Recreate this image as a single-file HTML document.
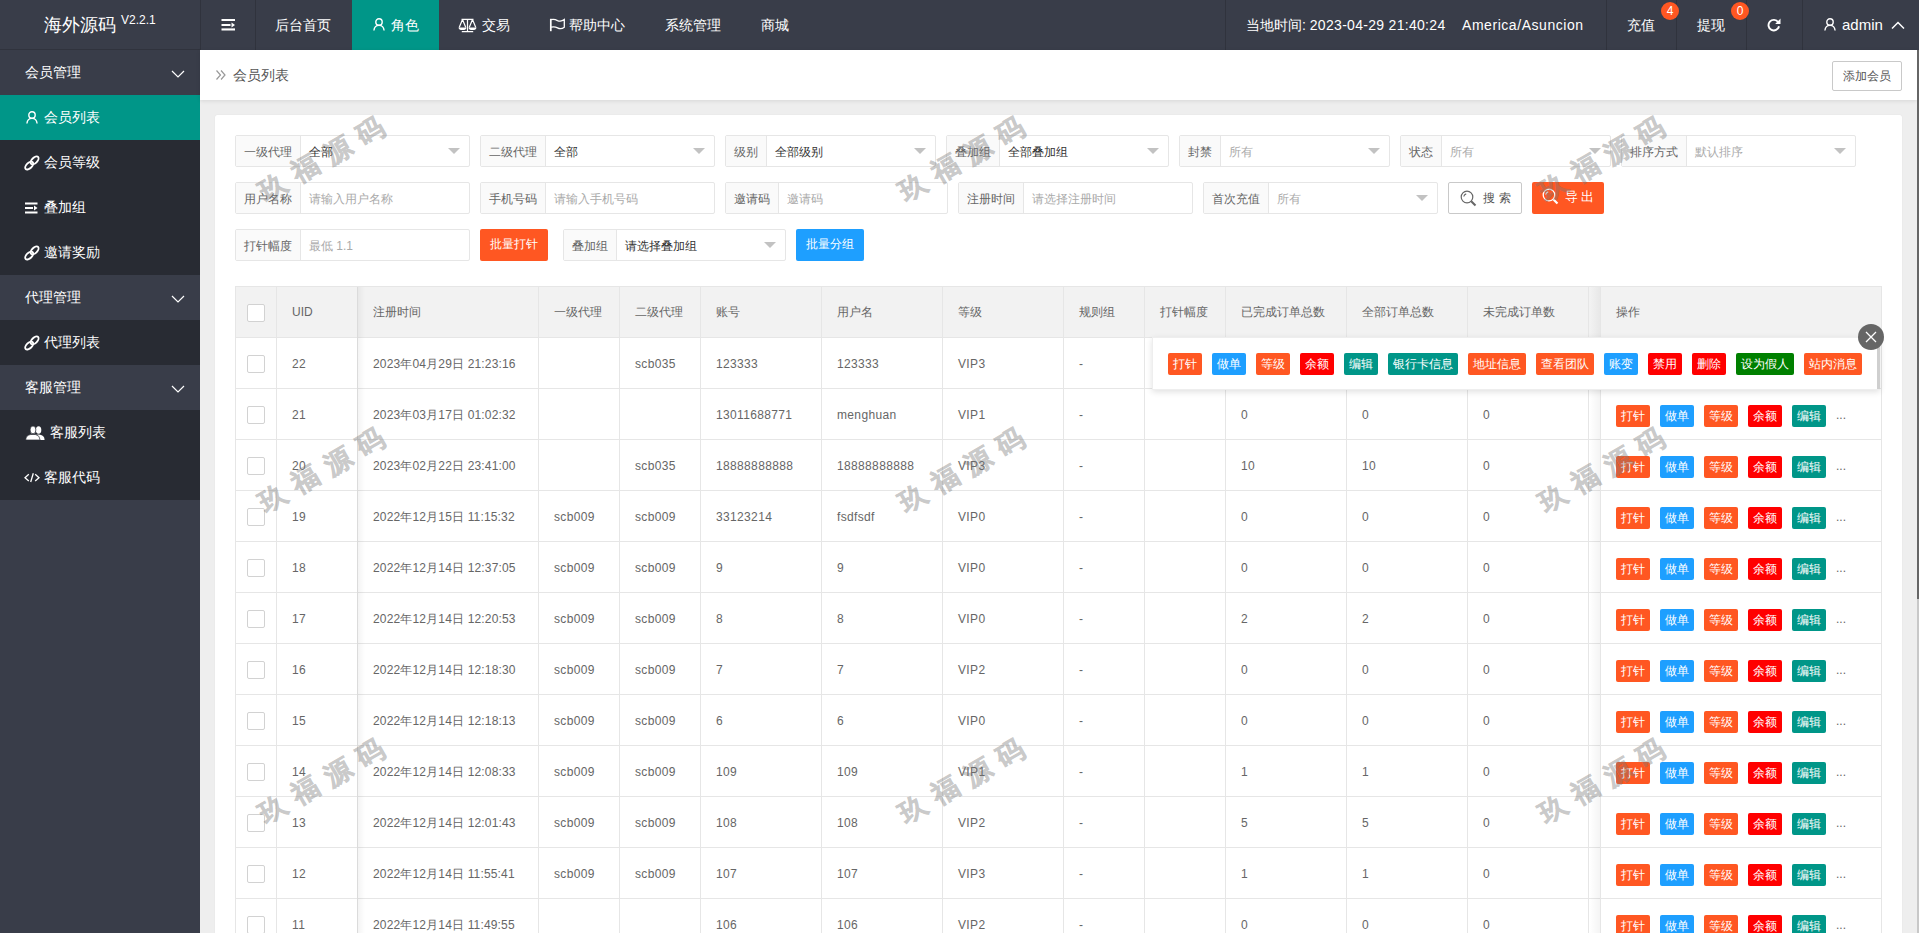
<!DOCTYPE html><html><head><meta charset="utf-8"><title>会员列表</title><style>
*{margin:0;padding:0;box-sizing:border-box}
html,body{width:1919px;height:933px;overflow:hidden;background:#eeeeee;font-family:"Liberation Sans", sans-serif;}
.abs{position:absolute}
.hd{position:absolute;left:0;top:0;width:1919px;height:50px;background:#393D49}
.sep{position:absolute;top:0;width:1px;height:50px;background:#30333d}
.nt{position:absolute;top:0;height:50px;line-height:50px;color:#fff;font-size:14px;white-space:nowrap}
.side{position:absolute;left:0;top:50px;width:200px;height:883px;background:#393D49}
.si{position:absolute;left:0;width:200px;height:45px;line-height:45px;color:#fff;font-size:14px;white-space:nowrap}
.si span{position:absolute;top:0}
.fi{position:absolute;height:32px;border:1px solid #e6e6e6;border-radius:2px;background:#fff}
.fl{position:absolute;left:0;top:0;height:30px;line-height:32px;background:#fafafa;border-right:1px solid #e6e6e6;color:#666;font-size:12px;text-align:center}
.fv{position:absolute;top:0;height:30px;line-height:32px;font-size:12px;white-space:nowrap}
.edge{position:absolute;top:12px;right:9px;width:0;height:0;border-left:6px solid transparent;border-right:6px solid transparent;border-top:6px solid #c2c2c2}
.btn{position:absolute;height:32px;line-height:32px;color:#fff;font-size:12px;text-align:center;border-radius:2px;white-space:nowrap}
.tl{position:absolute;background:#e6e6e6}
.tc{position:absolute;height:50px;line-height:50px;color:#666;font-size:12px;white-space:nowrap}
.cb{position:absolute;width:18px;height:18px;border:1px solid #d2d2d2;border-radius:2px;background:#fff}
.xb{position:absolute;height:22px;line-height:22px;color:#fff;font-size:12px;text-align:center;border-radius:2px;white-space:nowrap}
.wm{position:absolute;font-size:27px;font-weight:bold;color:#777;-webkit-text-stroke:0.5px #777;opacity:.38;white-space:nowrap;transform:rotate(-30deg);transform-origin:center center;letter-spacing:10px;line-height:30px}
</style></head><body>
<div class="hd">
<div class="sep" style="left:200px"></div>
<div class="sep" style="left:255px"></div>
<div class="sep" style="left:1225px"></div>
<div class="sep" style="left:1606px"></div>
<div class="sep" style="left:1676px"></div>
<div class="sep" style="left:1746px"></div>
<div class="sep" style="left:1802px"></div>
<div class="abs" style="left:352px;top:0;width:87px;height:50px;background:#009688"></div>
<div class="abs" style="left:0;top:49px;width:200px;height:1px;background:#30333d"></div>
<div class="nt" style="left:44px;font-size:18px;line-height:50px;top:0px">海外源码</div>
<div class="nt" style="left:121px;font-size:12px;line-height:14px;height:14px;top:13px">V2.2.1</div>
<svg class="abs" style="left:221px;top:18px" width="15" height="14" viewBox="0 0 15 14">
<rect x="0.5" y="1" width="13.5" height="2" fill="#fff"/><rect x="0.5" y="6" width="9" height="2" fill="#fff"/>
<path d="M10.5 4.5 L14 7 L10.5 9.5 Z" fill="#fff"/><rect x="0.5" y="10.4" width="13.5" height="2.1" fill="#fff"/></svg>
<div class="nt" style="left:275px">后台首页</div>
<svg class="abs" style="left:373px;top:18px" width="12" height="13" viewBox="0 0 12 13"><circle cx="6" cy="4" r="3.2" fill="none" stroke="#fff" stroke-width="1.4"/><path d="M0.9 12.5 C1.3 8.8 3.3 7.4 6 7.4 C8.7 7.4 10.7 8.8 11.1 12.5" fill="none" stroke="#fff" stroke-width="1.4"/></svg>
<div class="nt" style="left:391px">角色</div>
<svg class="abs" style="left:458px;top:18px" width="19" height="15" viewBox="0 0 19 15" fill="none" stroke="#fff" stroke-width="1.2">
<path d="M3.5 1.3 H15.5 M9.5 0.8 V13.2 M3.8 13.6 H15.2 M4.5 1.5 L1.2 9.6 M4.5 1.5 L7.8 9.6 M14.5 1.5 L11.2 9.6 M14.5 1.5 L17.8 9.6"/>
<path d="M0.6 9.4 H8.4 A3.9 2.6 0 0 1 0.6 9.4 Z M10.6 9.4 H18.4 A3.9 2.6 0 0 1 10.6 9.4 Z" fill="#fff" stroke="none"/></svg>
<div class="nt" style="left:482px">交易</div>
<svg class="abs" style="left:549px;top:18px" width="17" height="14" viewBox="0 0 17 14" fill="none" stroke="#fff" stroke-width="1.3">
<path d="M1.8 0.8 V13.2" stroke-width="1.7"/><path d="M2 1.6 Q5.5 0.8 8.5 2.6 Q12 4.2 15.3 1.6 V9.2 Q12 11.6 8.5 9.8 Q5.5 8.2 2 9.2"/></svg>
<div class="nt" style="left:569px">帮助中心</div>
<div class="nt" style="left:665px">系统管理</div>
<div class="nt" style="left:761px">商城</div>
<div class="nt" style="left:1246px;font-size:14px">当地时间: <span style="letter-spacing:0.3px">2023-04-29 21:40:24</span></div>
<div class="nt" style="left:1462px;font-size:14px;letter-spacing:0.55px">America/Asuncion</div>
<div class="nt" style="left:1627px">充值</div>
<div class="nt" style="left:1697px">提现</div>
<div class="abs" style="left:1661px;top:2px;width:18px;height:18px;border-radius:9px;background:#FF5722;color:#fff;font-size:12px;line-height:18px;text-align:center">4</div>
<div class="abs" style="left:1731px;top:2px;width:18px;height:18px;border-radius:9px;background:#FF5722;color:#fff;font-size:12px;line-height:18px;text-align:center">0</div>
<svg class="abs" style="left:1767px;top:18px" width="15" height="14" viewBox="0 0 15 14" fill="none" stroke="#fff" stroke-width="1.9">
<path d="M11.2 4.2 A5.3 5.3 0 1 0 12 8.3"/></svg>
<svg class="abs" style="left:1767px;top:18px" width="15" height="14" viewBox="0 0 15 14"><path d="M8.2 6 L13.5 6 L13.5 0.6 Z" fill="#fff"/></svg>
<svg class="abs" style="left:1824px;top:18px" width="12" height="13" viewBox="0 0 12 13"><circle cx="6" cy="4" r="3.2" fill="none" stroke="#fff" stroke-width="1.4"/><path d="M0.9 12.5 C1.3 8.8 3.3 7.4 6 7.4 C8.7 7.4 10.7 8.8 11.1 12.5" fill="none" stroke="#fff" stroke-width="1.4"/></svg>
<div class="nt" style="left:1842px;font-size:15px">admin</div>
<svg class="abs" style="left:1891px;top:21px" width="14" height="8" viewBox="0 0 14 8" fill="none" stroke="#fff" stroke-width="1.5"><path d="M1 7.5 L7 1.5 L13 7.5"/></svg>
</div>
<div class="side">
<div class="abs" style="left:0;top:45px;width:200px;height:180px;background:#282B33"></div>
<div class="abs" style="left:0;top:270px;width:200px;height:45px;background:#282B33"></div>
<div class="abs" style="left:0;top:360px;width:200px;height:90px;background:#282B33"></div>
<div class="abs" style="left:0;top:45px;width:200px;height:45px;background:#009688"></div>
<div class="si" style="top:0px"><span style="left:25px">会员管理</span></div>
<svg class="abs" style="left:171px;top:20px" width="14" height="9" viewBox="0 0 14 9" fill="none" stroke="#fff" stroke-width="1.2"><path d="M1 1 L7 7 L13 1"/></svg>
<div class="si" style="top:45px"><span style="left:44px">会员列表</span></div>
<svg class="abs" style="left:26px;top:61px" width="12" height="13" viewBox="0 0 12 13"><circle cx="6" cy="4" r="3.2" fill="none" stroke="#fff" stroke-width="1.4"/><path d="M0.9 12.5 C1.3 8.8 3.3 7.4 6 7.4 C8.7 7.4 10.7 8.8 11.1 12.5" fill="none" stroke="#fff" stroke-width="1.4"/></svg>
<div class="si" style="top:90px"><span style="left:44px">会员等级</span></div>
<svg class="abs" style="left:24px;top:105px" width="16" height="16" viewBox="0 0 16 16" fill="none" stroke="#fff" stroke-width="1.9"><ellipse cx="10.6" cy="5.4" rx="4.9" ry="2.7" transform="rotate(-45 10.6 5.4)"/><ellipse cx="5.2" cy="10.6" rx="4.9" ry="2.7" transform="rotate(-45 5.2 10.6)"/></svg>
<div class="si" style="top:135px"><span style="left:44px">叠加组</span></div>
<svg class="abs" style="left:25px;top:152px" width="13" height="12" viewBox="0 0 13 12"><rect x="0" y="0.5" width="12.5" height="2" fill="#fff"/><rect x="0" y="5" width="8" height="2" fill="#fff"/><path d="M9 3.6 L12.5 6 L9 8.4Z" fill="#fff"/><rect x="0" y="9.5" width="12.5" height="2" fill="#fff"/></svg>
<div class="si" style="top:180px"><span style="left:44px">邀请奖励</span></div>
<svg class="abs" style="left:24px;top:195px" width="16" height="16" viewBox="0 0 16 16" fill="none" stroke="#fff" stroke-width="1.9"><ellipse cx="10.6" cy="5.4" rx="4.9" ry="2.7" transform="rotate(-45 10.6 5.4)"/><ellipse cx="5.2" cy="10.6" rx="4.9" ry="2.7" transform="rotate(-45 5.2 10.6)"/></svg>
<div class="si" style="top:225px"><span style="left:25px">代理管理</span></div>
<svg class="abs" style="left:171px;top:245px" width="14" height="9" viewBox="0 0 14 9" fill="none" stroke="#fff" stroke-width="1.2"><path d="M1 1 L7 7 L13 1"/></svg>
<div class="si" style="top:270px"><span style="left:44px">代理列表</span></div>
<svg class="abs" style="left:24px;top:285px" width="16" height="16" viewBox="0 0 16 16" fill="none" stroke="#fff" stroke-width="1.9"><ellipse cx="10.6" cy="5.4" rx="4.9" ry="2.7" transform="rotate(-45 10.6 5.4)"/><ellipse cx="5.2" cy="10.6" rx="4.9" ry="2.7" transform="rotate(-45 5.2 10.6)"/></svg>
<div class="si" style="top:315px"><span style="left:25px">客服管理</span></div>
<svg class="abs" style="left:171px;top:335px" width="14" height="9" viewBox="0 0 14 9" fill="none" stroke="#fff" stroke-width="1.2"><path d="M1 1 L7 7 L13 1"/></svg>
<div class="si" style="top:360px"><span style="left:50px">客服列表</span></div>
<svg class="abs" style="left:25px;top:375px" width="20" height="16" viewBox="0 0 20 16"><ellipse cx="13.6" cy="5" rx="2.7" ry="3.8" fill="#fff"/><path d="M10 15 V11 Q11.5 9.6 13.6 9.6 Q19.4 9.8 19.6 15 Z" fill="#fff"/><ellipse cx="8" cy="4.9" rx="2.9" ry="3.9" fill="#fff" stroke="#282B33" stroke-width="0.7"/><path d="M0.7 15 Q0.9 10.4 5.2 9.6 Q8 9.2 10.8 9.6 Q14.9 10.4 15.1 15 Z" fill="#fff" stroke="#282B33" stroke-width="0.7"/></svg>
<div class="si" style="top:405px"><span style="left:44px">客服代码</span></div>
<svg class="abs" style="left:24px;top:423px" width="16" height="11" viewBox="0 0 16 11" fill="none" stroke="#fff" stroke-width="1.3"><path d="M4.8 1.3 L1 4.7 L4.8 8.1 M11.2 1.3 L15 4.7 L11.2 8.1 M9.3 0.3 L6.7 9"/></svg>
</div>
<div class="abs" style="left:200px;top:50px;width:1717px;height:50px;background:#fff;box-shadow:0 1px 4px rgba(0,0,0,.1)"></div>
<svg class="abs" style="left:215px;top:69px" width="12" height="12" viewBox="0 0 12 12" fill="none" stroke="#999" stroke-width="1.2"><path d="M1.5 1.5 L5.5 6 L1.5 10.5 M6 1.5 L10 6 L6 10.5"/></svg>
<div class="abs" style="left:233px;top:50px;height:50px;line-height:50px;font-size:14px;color:#555">会员列表</div>
<div class="abs" style="left:1832px;top:61px;width:70px;height:30px;line-height:28px;border:1px solid #c9c9c9;border-radius:2px;background:#fff;color:#555;font-size:12px;text-align:center">添加会员</div>
<div class="abs" style="left:1917px;top:50px;width:2px;height:883px;background:#c8c8c8"></div>
<div class="abs" style="left:1917px;top:50px;width:2px;height:549px;background:#666"></div>
<div class="abs" style="left:215px;top:115px;width:1687px;height:830px;background:#fff;border-radius:2px;box-shadow:0 0 1px rgba(0,0,0,.12)"></div>
<div class="fi" style="left:235px;top:135px;width:235px"><div class="fl" style="width:65px">一级代理</div><div class="fv" style="left:73px;color:#333">全部</div><div class="edge"></div></div>
<div class="fi" style="left:480px;top:135px;width:235px"><div class="fl" style="width:65px">二级代理</div><div class="fv" style="left:73px;color:#333">全部</div><div class="edge"></div></div>
<div class="fi" style="left:725px;top:135px;width:211px"><div class="fl" style="width:41px">级别</div><div class="fv" style="left:49px;color:#333">全部级别</div><div class="edge"></div></div>
<div class="fi" style="left:946px;top:135px;width:223px"><div class="fl" style="width:53px">叠加组</div><div class="fv" style="left:61px;color:#333">全部叠加组</div><div class="edge"></div></div>
<div class="fi" style="left:1179px;top:135px;width:211px"><div class="fl" style="width:41px">封禁</div><div class="fv" style="left:49px;color:#aaa">所有</div><div class="edge"></div></div>
<div class="fi" style="left:1400px;top:135px;width:211px"><div class="fl" style="width:41px">状态</div><div class="fv" style="left:49px;color:#aaa">所有</div><div class="edge"></div></div>
<div class="fi" style="left:1621px;top:135px;width:235px"><div class="fl" style="width:65px">排序方式</div><div class="fv" style="left:73px;color:#aaa">默认排序</div><div class="edge"></div></div>
<div class="fi" style="left:235px;top:182px;width:235px"><div class="fl" style="width:65px">用户名称</div><div class="fv" style="left:73px;color:#aaa">请输入用户名称</div></div>
<div class="fi" style="left:480px;top:182px;width:235px"><div class="fl" style="width:65px">手机号码</div><div class="fv" style="left:73px;color:#aaa">请输入手机号码</div></div>
<div class="fi" style="left:725px;top:182px;width:223px"><div class="fl" style="width:53px">邀请码</div><div class="fv" style="left:61px;color:#aaa">邀请码</div></div>
<div class="fi" style="left:958px;top:182px;width:235px"><div class="fl" style="width:65px">注册时间</div><div class="fv" style="left:73px;color:#aaa">请选择注册时间</div></div>
<div class="fi" style="left:1203px;top:182px;width:235px"><div class="fl" style="width:65px">首次充值</div><div class="fv" style="left:73px;color:#aaa">所有</div><div class="edge"></div></div>
<div class="btn" style="left:1448px;top:182px;width:74px;border:1px solid #c9c9c9;background:#fff;color:#555;line-height:30px"><svg class="abs" style="left:11px;top:7px" width="17" height="17" viewBox="0 0 17 17" fill="none" stroke="#666" stroke-width="1.2"><circle cx="7" cy="7" r="5.8"/><path d="M11.2 11.2 L15.5 15.5" stroke-width="2"/><path d="M3.8 6.5 A3.3 3.3 0 0 1 6.2 3.8"/></svg><span class="abs" style="left:34px;top:0;letter-spacing:4px">搜索</span></div>
<div class="btn" style="left:1532px;top:182px;width:72px;background:#FF5722"><svg class="abs" style="left:10px;top:6px" width="17" height="17" viewBox="0 0 17 17" fill="none" stroke="#fff" stroke-width="1.3"><circle cx="7" cy="7" r="5.8"/><path d="M11.2 11.2 L15.5 15.5" stroke-width="2.2"/><path d="M3.8 6.5 A3.3 3.3 0 0 1 6.2 3.8"/></svg><span class="abs" style="left:33px;top:-1px;font-size:13px;letter-spacing:3px">导出</span></div>
<div class="fi" style="left:235px;top:229px;width:235px"><div class="fl" style="width:65px">打针幅度</div><div class="fv" style="left:73px;color:#aaa">最低 1.1</div></div>
<div class="btn" style="left:480px;top:229px;width:68px;line-height:30px;background:#FF5722">批量打针</div>
<div class="fi" style="left:563px;top:229px;width:223px"><div class="fl" style="width:53px">叠加组</div><div class="fv" style="left:61px;color:#333">请选择叠加组</div><div class="edge"></div></div>
<div class="btn" style="left:796px;top:229px;width:68px;line-height:30px;background:#1E9FFF">批量分组</div>
<div class="abs" style="left:235px;top:286px;width:1647px;height:51px;background:#f2f2f2"></div>
<div class="tl" style="left:235px;top:286px;width:1647px;height:1px"></div>
<div class="tl" style="left:235px;top:337px;width:1647px;height:1px"></div>
<div class="tl" style="left:235px;top:388px;width:1647px;height:1px"></div>
<div class="tl" style="left:235px;top:439px;width:1647px;height:1px"></div>
<div class="tl" style="left:235px;top:490px;width:1647px;height:1px"></div>
<div class="tl" style="left:235px;top:541px;width:1647px;height:1px"></div>
<div class="tl" style="left:235px;top:592px;width:1647px;height:1px"></div>
<div class="tl" style="left:235px;top:643px;width:1647px;height:1px"></div>
<div class="tl" style="left:235px;top:694px;width:1647px;height:1px"></div>
<div class="tl" style="left:235px;top:745px;width:1647px;height:1px"></div>
<div class="tl" style="left:235px;top:796px;width:1647px;height:1px"></div>
<div class="tl" style="left:235px;top:847px;width:1647px;height:1px"></div>
<div class="tl" style="left:235px;top:898px;width:1647px;height:1px"></div>
<div class="tl" style="left:235px;top:286px;width:1px;height:647px"></div>
<div class="tl" style="left:276px;top:286px;width:1px;height:647px"></div>
<div class="tl" style="left:357px;top:286px;width:1px;height:647px"></div>
<div class="tl" style="left:538px;top:286px;width:1px;height:647px"></div>
<div class="tl" style="left:619px;top:286px;width:1px;height:647px"></div>
<div class="tl" style="left:700px;top:286px;width:1px;height:647px"></div>
<div class="tl" style="left:821px;top:286px;width:1px;height:647px"></div>
<div class="tl" style="left:942px;top:286px;width:1px;height:647px"></div>
<div class="tl" style="left:1063px;top:286px;width:1px;height:647px"></div>
<div class="tl" style="left:1144px;top:286px;width:1px;height:647px"></div>
<div class="tl" style="left:1225px;top:286px;width:1px;height:647px"></div>
<div class="tl" style="left:1346px;top:286px;width:1px;height:647px"></div>
<div class="tl" style="left:1467px;top:286px;width:1px;height:647px"></div>
<div class="tl" style="left:1588px;top:286px;width:1px;height:647px"></div>
<div class="tl" style="left:1881px;top:286px;width:1px;height:647px"></div>
<div class="tc" style="left:292px;top:287px">UID</div>
<div class="tc" style="left:373px;top:287px">注册时间</div>
<div class="tc" style="left:554px;top:287px">一级代理</div>
<div class="tc" style="left:635px;top:287px">二级代理</div>
<div class="tc" style="left:716px;top:287px">账号</div>
<div class="tc" style="left:837px;top:287px">用户名</div>
<div class="tc" style="left:958px;top:287px">等级</div>
<div class="tc" style="left:1079px;top:287px">规则组</div>
<div class="tc" style="left:1160px;top:287px">打针幅度</div>
<div class="tc" style="left:1241px;top:287px">已完成订单总数</div>
<div class="tc" style="left:1362px;top:287px">全部订单总数</div>
<div class="tc" style="left:1483px;top:287px">未完成订单数</div>
<div class="cb" style="left:247px;top:304px;background:#fff"></div>
<div class="cb" style="left:247px;top:355px"></div>
<div class="tc" style="left:292px;top:339px;letter-spacing:0.35px">22</div>
<div class="tc" style="left:373px;top:339px;letter-spacing:0.16px">2023年04月29日 21:23:16</div>
<div class="tc" style="left:635px;top:339px;letter-spacing:0.35px">scb035</div>
<div class="tc" style="left:716px;top:339px;letter-spacing:0.35px">123333</div>
<div class="tc" style="left:837px;top:339px;letter-spacing:0.35px">123333</div>
<div class="tc" style="left:958px;top:339px;letter-spacing:0.35px">VIP3</div>
<div class="tc" style="left:1079px;top:339px">-</div>
<div class="cb" style="left:247px;top:406px"></div>
<div class="tc" style="left:292px;top:390px;letter-spacing:0.35px">21</div>
<div class="tc" style="left:373px;top:390px;letter-spacing:0.16px">2023年03月17日 01:02:32</div>
<div class="tc" style="left:716px;top:390px;letter-spacing:0.35px">13011688771</div>
<div class="tc" style="left:837px;top:390px;letter-spacing:0.35px">menghuan</div>
<div class="tc" style="left:958px;top:390px;letter-spacing:0.35px">VIP1</div>
<div class="tc" style="left:1079px;top:390px">-</div>
<div class="tc" style="left:1241px;top:390px">0</div>
<div class="tc" style="left:1362px;top:390px">0</div>
<div class="tc" style="left:1483px;top:390px">0</div>
<div class="cb" style="left:247px;top:457px"></div>
<div class="tc" style="left:292px;top:441px;letter-spacing:0.35px">20</div>
<div class="tc" style="left:373px;top:441px;letter-spacing:0.16px">2023年02月22日 23:41:00</div>
<div class="tc" style="left:635px;top:441px;letter-spacing:0.35px">scb035</div>
<div class="tc" style="left:716px;top:441px;letter-spacing:0.35px">18888888888</div>
<div class="tc" style="left:837px;top:441px;letter-spacing:0.35px">18888888888</div>
<div class="tc" style="left:958px;top:441px;letter-spacing:0.35px">VIP3</div>
<div class="tc" style="left:1079px;top:441px">-</div>
<div class="tc" style="left:1241px;top:441px;letter-spacing:0.35px">10</div>
<div class="tc" style="left:1362px;top:441px;letter-spacing:0.35px">10</div>
<div class="tc" style="left:1483px;top:441px">0</div>
<div class="cb" style="left:247px;top:508px"></div>
<div class="tc" style="left:292px;top:492px;letter-spacing:0.35px">19</div>
<div class="tc" style="left:373px;top:492px;letter-spacing:0.16px">2022年12月15日 11:15:32</div>
<div class="tc" style="left:554px;top:492px;letter-spacing:0.35px">scb009</div>
<div class="tc" style="left:635px;top:492px;letter-spacing:0.35px">scb009</div>
<div class="tc" style="left:716px;top:492px;letter-spacing:0.35px">33123214</div>
<div class="tc" style="left:837px;top:492px;letter-spacing:0.35px">fsdfsdf</div>
<div class="tc" style="left:958px;top:492px;letter-spacing:0.35px">VIP0</div>
<div class="tc" style="left:1079px;top:492px">-</div>
<div class="tc" style="left:1241px;top:492px">0</div>
<div class="tc" style="left:1362px;top:492px">0</div>
<div class="tc" style="left:1483px;top:492px">0</div>
<div class="cb" style="left:247px;top:559px"></div>
<div class="tc" style="left:292px;top:543px;letter-spacing:0.35px">18</div>
<div class="tc" style="left:373px;top:543px;letter-spacing:0.16px">2022年12月14日 12:37:05</div>
<div class="tc" style="left:554px;top:543px;letter-spacing:0.35px">scb009</div>
<div class="tc" style="left:635px;top:543px;letter-spacing:0.35px">scb009</div>
<div class="tc" style="left:716px;top:543px">9</div>
<div class="tc" style="left:837px;top:543px">9</div>
<div class="tc" style="left:958px;top:543px;letter-spacing:0.35px">VIP0</div>
<div class="tc" style="left:1079px;top:543px">-</div>
<div class="tc" style="left:1241px;top:543px">0</div>
<div class="tc" style="left:1362px;top:543px">0</div>
<div class="tc" style="left:1483px;top:543px">0</div>
<div class="cb" style="left:247px;top:610px"></div>
<div class="tc" style="left:292px;top:594px;letter-spacing:0.35px">17</div>
<div class="tc" style="left:373px;top:594px;letter-spacing:0.16px">2022年12月14日 12:20:53</div>
<div class="tc" style="left:554px;top:594px;letter-spacing:0.35px">scb009</div>
<div class="tc" style="left:635px;top:594px;letter-spacing:0.35px">scb009</div>
<div class="tc" style="left:716px;top:594px">8</div>
<div class="tc" style="left:837px;top:594px">8</div>
<div class="tc" style="left:958px;top:594px;letter-spacing:0.35px">VIP0</div>
<div class="tc" style="left:1079px;top:594px">-</div>
<div class="tc" style="left:1241px;top:594px">2</div>
<div class="tc" style="left:1362px;top:594px">2</div>
<div class="tc" style="left:1483px;top:594px">0</div>
<div class="cb" style="left:247px;top:661px"></div>
<div class="tc" style="left:292px;top:645px;letter-spacing:0.35px">16</div>
<div class="tc" style="left:373px;top:645px;letter-spacing:0.16px">2022年12月14日 12:18:30</div>
<div class="tc" style="left:554px;top:645px;letter-spacing:0.35px">scb009</div>
<div class="tc" style="left:635px;top:645px;letter-spacing:0.35px">scb009</div>
<div class="tc" style="left:716px;top:645px">7</div>
<div class="tc" style="left:837px;top:645px">7</div>
<div class="tc" style="left:958px;top:645px;letter-spacing:0.35px">VIP2</div>
<div class="tc" style="left:1079px;top:645px">-</div>
<div class="tc" style="left:1241px;top:645px">0</div>
<div class="tc" style="left:1362px;top:645px">0</div>
<div class="tc" style="left:1483px;top:645px">0</div>
<div class="cb" style="left:247px;top:712px"></div>
<div class="tc" style="left:292px;top:696px;letter-spacing:0.35px">15</div>
<div class="tc" style="left:373px;top:696px;letter-spacing:0.16px">2022年12月14日 12:18:13</div>
<div class="tc" style="left:554px;top:696px;letter-spacing:0.35px">scb009</div>
<div class="tc" style="left:635px;top:696px;letter-spacing:0.35px">scb009</div>
<div class="tc" style="left:716px;top:696px">6</div>
<div class="tc" style="left:837px;top:696px">6</div>
<div class="tc" style="left:958px;top:696px;letter-spacing:0.35px">VIP0</div>
<div class="tc" style="left:1079px;top:696px">-</div>
<div class="tc" style="left:1241px;top:696px">0</div>
<div class="tc" style="left:1362px;top:696px">0</div>
<div class="tc" style="left:1483px;top:696px">0</div>
<div class="cb" style="left:247px;top:763px"></div>
<div class="tc" style="left:292px;top:747px;letter-spacing:0.35px">14</div>
<div class="tc" style="left:373px;top:747px;letter-spacing:0.16px">2022年12月14日 12:08:33</div>
<div class="tc" style="left:554px;top:747px;letter-spacing:0.35px">scb009</div>
<div class="tc" style="left:635px;top:747px;letter-spacing:0.35px">scb009</div>
<div class="tc" style="left:716px;top:747px;letter-spacing:0.35px">109</div>
<div class="tc" style="left:837px;top:747px;letter-spacing:0.35px">109</div>
<div class="tc" style="left:958px;top:747px;letter-spacing:0.35px">VIP1</div>
<div class="tc" style="left:1079px;top:747px">-</div>
<div class="tc" style="left:1241px;top:747px">1</div>
<div class="tc" style="left:1362px;top:747px">1</div>
<div class="tc" style="left:1483px;top:747px">0</div>
<div class="cb" style="left:247px;top:814px"></div>
<div class="tc" style="left:292px;top:798px;letter-spacing:0.35px">13</div>
<div class="tc" style="left:373px;top:798px;letter-spacing:0.16px">2022年12月14日 12:01:43</div>
<div class="tc" style="left:554px;top:798px;letter-spacing:0.35px">scb009</div>
<div class="tc" style="left:635px;top:798px;letter-spacing:0.35px">scb009</div>
<div class="tc" style="left:716px;top:798px;letter-spacing:0.35px">108</div>
<div class="tc" style="left:837px;top:798px;letter-spacing:0.35px">108</div>
<div class="tc" style="left:958px;top:798px;letter-spacing:0.35px">VIP2</div>
<div class="tc" style="left:1079px;top:798px">-</div>
<div class="tc" style="left:1241px;top:798px">5</div>
<div class="tc" style="left:1362px;top:798px">5</div>
<div class="tc" style="left:1483px;top:798px">0</div>
<div class="cb" style="left:247px;top:865px"></div>
<div class="tc" style="left:292px;top:849px;letter-spacing:0.35px">12</div>
<div class="tc" style="left:373px;top:849px;letter-spacing:0.16px">2022年12月14日 11:55:41</div>
<div class="tc" style="left:554px;top:849px;letter-spacing:0.35px">scb009</div>
<div class="tc" style="left:635px;top:849px;letter-spacing:0.35px">scb009</div>
<div class="tc" style="left:716px;top:849px;letter-spacing:0.35px">107</div>
<div class="tc" style="left:837px;top:849px;letter-spacing:0.35px">107</div>
<div class="tc" style="left:958px;top:849px;letter-spacing:0.35px">VIP3</div>
<div class="tc" style="left:1079px;top:849px">-</div>
<div class="tc" style="left:1241px;top:849px">1</div>
<div class="tc" style="left:1362px;top:849px">1</div>
<div class="tc" style="left:1483px;top:849px">0</div>
<div class="cb" style="left:247px;top:916px"></div>
<div class="tc" style="left:292px;top:900px;letter-spacing:0.35px">11</div>
<div class="tc" style="left:373px;top:900px;letter-spacing:0.16px">2022年12月14日 11:49:55</div>
<div class="tc" style="left:716px;top:900px;letter-spacing:0.35px">106</div>
<div class="tc" style="left:837px;top:900px;letter-spacing:0.35px">106</div>
<div class="tc" style="left:958px;top:900px;letter-spacing:0.35px">VIP2</div>
<div class="tc" style="left:1079px;top:900px">-</div>
<div class="tc" style="left:1241px;top:900px">0</div>
<div class="tc" style="left:1362px;top:900px">0</div>
<div class="tc" style="left:1483px;top:900px">0</div>
<div class="abs" style="left:357px;top:287px;width:8px;height:647px;background:linear-gradient(to right,rgba(0,0,0,.05),rgba(0,0,0,0))"></div>
<div class="abs" style="left:1590px;top:287px;width:10px;height:647px;background:linear-gradient(to left,rgba(0,0,0,.045),rgba(0,0,0,0))"></div>
<div class="tl" style="left:1600px;top:287px;width:1px;height:647px"></div>
<div class="abs" style="left:1601px;top:287px;width:280px;height:50px;background:#f2f2f2"></div>
<div class="abs" style="left:1601px;top:338px;width:280px;height:596px;background:#fff"></div>
<div class="tl" style="left:1600px;top:337px;width:281px;height:1px"></div>
<div class="tl" style="left:1600px;top:388px;width:281px;height:1px"></div>
<div class="tl" style="left:1600px;top:439px;width:281px;height:1px"></div>
<div class="tl" style="left:1600px;top:490px;width:281px;height:1px"></div>
<div class="tl" style="left:1600px;top:541px;width:281px;height:1px"></div>
<div class="tl" style="left:1600px;top:592px;width:281px;height:1px"></div>
<div class="tl" style="left:1600px;top:643px;width:281px;height:1px"></div>
<div class="tl" style="left:1600px;top:694px;width:281px;height:1px"></div>
<div class="tl" style="left:1600px;top:745px;width:281px;height:1px"></div>
<div class="tl" style="left:1600px;top:796px;width:281px;height:1px"></div>
<div class="tl" style="left:1600px;top:847px;width:281px;height:1px"></div>
<div class="tl" style="left:1600px;top:898px;width:281px;height:1px"></div>
<div class="tl" style="left:1600px;top:949px;width:281px;height:1px"></div>
<div class="tc" style="left:1616px;top:287px">操作</div>
<div class="xb" style="left:1616px;top:405px;width:34px;background:#FF5722">打针</div>
<div class="xb" style="left:1660px;top:405px;width:34px;background:#1E9FFF">做单</div>
<div class="xb" style="left:1704px;top:405px;width:34px;background:#FF5722">等级</div>
<div class="xb" style="left:1748px;top:405px;width:34px;background:#FF0000">余额</div>
<div class="xb" style="left:1792px;top:405px;width:34px;background:#009688">编辑</div>
<div class="tc" style="left:1836px;top:390px;font-size:12px;letter-spacing:0px">...</div>
<div class="xb" style="left:1616px;top:456px;width:34px;background:#FF5722">打针</div>
<div class="xb" style="left:1660px;top:456px;width:34px;background:#1E9FFF">做单</div>
<div class="xb" style="left:1704px;top:456px;width:34px;background:#FF5722">等级</div>
<div class="xb" style="left:1748px;top:456px;width:34px;background:#FF0000">余额</div>
<div class="xb" style="left:1792px;top:456px;width:34px;background:#009688">编辑</div>
<div class="tc" style="left:1836px;top:441px;font-size:12px;letter-spacing:0px">...</div>
<div class="xb" style="left:1616px;top:507px;width:34px;background:#FF5722">打针</div>
<div class="xb" style="left:1660px;top:507px;width:34px;background:#1E9FFF">做单</div>
<div class="xb" style="left:1704px;top:507px;width:34px;background:#FF5722">等级</div>
<div class="xb" style="left:1748px;top:507px;width:34px;background:#FF0000">余额</div>
<div class="xb" style="left:1792px;top:507px;width:34px;background:#009688">编辑</div>
<div class="tc" style="left:1836px;top:492px;font-size:12px;letter-spacing:0px">...</div>
<div class="xb" style="left:1616px;top:558px;width:34px;background:#FF5722">打针</div>
<div class="xb" style="left:1660px;top:558px;width:34px;background:#1E9FFF">做单</div>
<div class="xb" style="left:1704px;top:558px;width:34px;background:#FF5722">等级</div>
<div class="xb" style="left:1748px;top:558px;width:34px;background:#FF0000">余额</div>
<div class="xb" style="left:1792px;top:558px;width:34px;background:#009688">编辑</div>
<div class="tc" style="left:1836px;top:543px;font-size:12px;letter-spacing:0px">...</div>
<div class="xb" style="left:1616px;top:609px;width:34px;background:#FF5722">打针</div>
<div class="xb" style="left:1660px;top:609px;width:34px;background:#1E9FFF">做单</div>
<div class="xb" style="left:1704px;top:609px;width:34px;background:#FF5722">等级</div>
<div class="xb" style="left:1748px;top:609px;width:34px;background:#FF0000">余额</div>
<div class="xb" style="left:1792px;top:609px;width:34px;background:#009688">编辑</div>
<div class="tc" style="left:1836px;top:594px;font-size:12px;letter-spacing:0px">...</div>
<div class="xb" style="left:1616px;top:660px;width:34px;background:#FF5722">打针</div>
<div class="xb" style="left:1660px;top:660px;width:34px;background:#1E9FFF">做单</div>
<div class="xb" style="left:1704px;top:660px;width:34px;background:#FF5722">等级</div>
<div class="xb" style="left:1748px;top:660px;width:34px;background:#FF0000">余额</div>
<div class="xb" style="left:1792px;top:660px;width:34px;background:#009688">编辑</div>
<div class="tc" style="left:1836px;top:645px;font-size:12px;letter-spacing:0px">...</div>
<div class="xb" style="left:1616px;top:711px;width:34px;background:#FF5722">打针</div>
<div class="xb" style="left:1660px;top:711px;width:34px;background:#1E9FFF">做单</div>
<div class="xb" style="left:1704px;top:711px;width:34px;background:#FF5722">等级</div>
<div class="xb" style="left:1748px;top:711px;width:34px;background:#FF0000">余额</div>
<div class="xb" style="left:1792px;top:711px;width:34px;background:#009688">编辑</div>
<div class="tc" style="left:1836px;top:696px;font-size:12px;letter-spacing:0px">...</div>
<div class="xb" style="left:1616px;top:762px;width:34px;background:#FF5722">打针</div>
<div class="xb" style="left:1660px;top:762px;width:34px;background:#1E9FFF">做单</div>
<div class="xb" style="left:1704px;top:762px;width:34px;background:#FF5722">等级</div>
<div class="xb" style="left:1748px;top:762px;width:34px;background:#FF0000">余额</div>
<div class="xb" style="left:1792px;top:762px;width:34px;background:#009688">编辑</div>
<div class="tc" style="left:1836px;top:747px;font-size:12px;letter-spacing:0px">...</div>
<div class="xb" style="left:1616px;top:813px;width:34px;background:#FF5722">打针</div>
<div class="xb" style="left:1660px;top:813px;width:34px;background:#1E9FFF">做单</div>
<div class="xb" style="left:1704px;top:813px;width:34px;background:#FF5722">等级</div>
<div class="xb" style="left:1748px;top:813px;width:34px;background:#FF0000">余额</div>
<div class="xb" style="left:1792px;top:813px;width:34px;background:#009688">编辑</div>
<div class="tc" style="left:1836px;top:798px;font-size:12px;letter-spacing:0px">...</div>
<div class="xb" style="left:1616px;top:864px;width:34px;background:#FF5722">打针</div>
<div class="xb" style="left:1660px;top:864px;width:34px;background:#1E9FFF">做单</div>
<div class="xb" style="left:1704px;top:864px;width:34px;background:#FF5722">等级</div>
<div class="xb" style="left:1748px;top:864px;width:34px;background:#FF0000">余额</div>
<div class="xb" style="left:1792px;top:864px;width:34px;background:#009688">编辑</div>
<div class="tc" style="left:1836px;top:849px;font-size:12px;letter-spacing:0px">...</div>
<div class="xb" style="left:1616px;top:915px;width:34px;background:#FF5722">打针</div>
<div class="xb" style="left:1660px;top:915px;width:34px;background:#1E9FFF">做单</div>
<div class="xb" style="left:1704px;top:915px;width:34px;background:#FF5722">等级</div>
<div class="xb" style="left:1748px;top:915px;width:34px;background:#FF0000">余额</div>
<div class="xb" style="left:1792px;top:915px;width:34px;background:#009688">编辑</div>
<div class="tc" style="left:1836px;top:900px;font-size:12px;letter-spacing:0px">...</div>
<div class="abs" style="left:1152px;top:337px;width:728px;height:53px;background:#fff;border:1px solid #eee;box-shadow:0 2px 6px rgba(0,0,0,.12)"></div>
<div class="abs" style="left:1877px;top:347px;width:3px;height:42px;background:#cfcfcf"></div>
<div class="xb" style="left:1168px;top:353px;width:34px;background:#FF5722">打针</div>
<div class="xb" style="left:1212px;top:353px;width:34px;background:#1E9FFF">做单</div>
<div class="xb" style="left:1256px;top:353px;width:34px;background:#FF5722">等级</div>
<div class="xb" style="left:1300px;top:353px;width:34px;background:#FF0000">余额</div>
<div class="xb" style="left:1344px;top:353px;width:34px;background:#009688">编辑</div>
<div class="xb" style="left:1388px;top:353px;width:70px;background:#009688">银行卡信息</div>
<div class="xb" style="left:1468px;top:353px;width:58px;background:#FF5722">地址信息</div>
<div class="xb" style="left:1536px;top:353px;width:58px;background:#FF5722">查看团队</div>
<div class="xb" style="left:1604px;top:353px;width:34px;background:#1E9FFF">账变</div>
<div class="xb" style="left:1648px;top:353px;width:34px;background:#FF0000">禁用</div>
<div class="xb" style="left:1692px;top:353px;width:34px;background:#FF0000">删除</div>
<div class="xb" style="left:1736px;top:353px;width:58px;background:#008000">设为假人</div>
<div class="xb" style="left:1804px;top:353px;width:58px;background:#FF5722">站内消息</div>
<div class="abs" style="left:1858px;top:324px;width:26px;height:26px;border-radius:13px;background:#666"><svg class="abs" style="left:7px;top:7px" width="12" height="12" viewBox="0 0 12 12" stroke="#fff" stroke-width="1.3"><path d="M1 1 L11 11 M11 1 L1 11"/></svg></div>
<div class="wm" style="left:251px;top:142px;width:150px;height:30px;text-align:center">玖福源码</div>
<div class="wm" style="left:251px;top:453px;width:150px;height:30px;text-align:center">玖福源码</div>
<div class="wm" style="left:251px;top:764px;width:150px;height:30px;text-align:center">玖福源码</div>
<div class="wm" style="left:891px;top:142px;width:150px;height:30px;text-align:center">玖福源码</div>
<div class="wm" style="left:891px;top:453px;width:150px;height:30px;text-align:center">玖福源码</div>
<div class="wm" style="left:891px;top:764px;width:150px;height:30px;text-align:center">玖福源码</div>
<div class="wm" style="left:1531px;top:142px;width:150px;height:30px;text-align:center">玖福源码</div>
<div class="wm" style="left:1531px;top:453px;width:150px;height:30px;text-align:center">玖福源码</div>
<div class="wm" style="left:1531px;top:764px;width:150px;height:30px;text-align:center">玖福源码</div>
</body></html>
